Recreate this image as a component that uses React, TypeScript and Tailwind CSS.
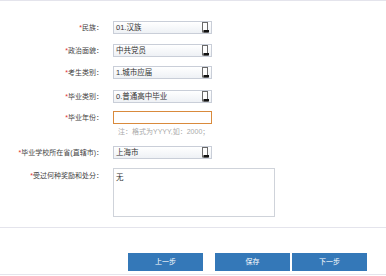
import React from "react";

const font = { fontFamily: '"Liberation Sans", "Noto Sans CJK SC", sans-serif' };

function SelIcon() {
  return (
    <svg width="7" height="11" viewBox="0 0 7 11" className="shrink-0">
      <rect x="0.5" y="0.5" width="5" height="9.5" fill="#fdfdfd" stroke="#6a6a6a" />
      <rect x="1.5" y="8" width="5.5" height="2.5" fill="#111" />
    </svg>
  );
}

function Label({ text }: { text: string }) {
  return (
    <div className="w-[103px] shrink-0 text-right text-[7px] leading-[13px] text-[#444] whitespace-nowrap">
      <span className="text-[#e03030]">*</span>
      {text}：
    </div>
  );
}

function SelectBox({ value }: { value: string }) {
  return (
    <div className="ml-[10px] w-[99px] h-[13px] flex items-center justify-between border border-[#c9ced8] bg-gradient-to-b from-[#ffffff] to-[#eef1f5] pl-[2px] pr-[2px]">
      <span className="text-[7.5px] leading-none text-[#333]">{value}</span>
      <SelIcon />
    </div>
  );
}

function SelectRow({ label, value, mt }: { label: string; value: string; mt: string }) {
  return (
    <div className={`flex items-center ${mt}`}>
      <Label text={label} />
      <SelectBox value={value} />
    </div>
  );
}

export default function App() {
  return (
    <div className="w-[386px] h-[276px] bg-white relative overflow-hidden" style={font}>
      <div className="h-px bg-[#e4e4ec]" />
      <div className="pt-[20px]">
        <SelectRow label="民族" value="01.汉族" mt="mt-0" />
        <SelectRow label="政治面貌" value="中共党员" mt="mt-[10px]" />
        <SelectRow label="考生类别" value="1.城市应届" mt="mt-[9px]" />
        <SelectRow label="毕业类别" value="0.普通高中毕业" mt="mt-[11px]" />
        <div className="flex items-center mt-[8px]">
          <Label text="毕业年份" />
          <div className="ml-[10px] w-[99px] h-[13px] border border-[#d98a3c] bg-white" />
        </div>
        <div className="ml-[118px] mt-[3px] text-[7px] leading-[10px] text-[#aaa]">注：格式为YYYY,如：2000；</div>
        <div className="flex items-center mt-[9px]">
          <div className="w-[103px] shrink-0 text-right text-[7px] leading-[13px] text-[#444] whitespace-nowrap">
            <span className="text-[#e03030]">*</span>毕业学校所在省(直辖市)：
          </div>
          <SelectBox value="上海市" />
        </div>
        <div className="flex items-start mt-[9px]">
          <div className="w-[103px] shrink-0 text-right text-[7px] leading-[13px] text-[#444] whitespace-nowrap pt-[1px]">
            <span className="text-[#e03030]">*</span>受过何种奖励和处分：
          </div>
          <div className="ml-[10px] w-[162px] h-[49px] border border-[#cfd3da] bg-white px-[2px] pt-[4px] text-[7.5px] leading-[10px] text-[#333]">
            无
          </div>
        </div>
      </div>
      <div className="mt-[10px] h-px bg-[#e4e4ec]" />
      <div className="flex mt-[25px] ml-[128px]">
        <button className="w-[75px] h-[18px] bg-[#3478b8] text-white text-[7px]">上一步</button>
        <button className="ml-[12px] w-[75px] h-[18px] bg-[#3478b8] text-white text-[7px]">保存</button>
        <button className="ml-[2px] w-[75px] h-[18px] bg-[#3478b8] text-white text-[7px]">下一步</button>
      </div>
      <div className="mt-[3px] h-px bg-[#e4e4ec]" />
    </div>
  );
}
